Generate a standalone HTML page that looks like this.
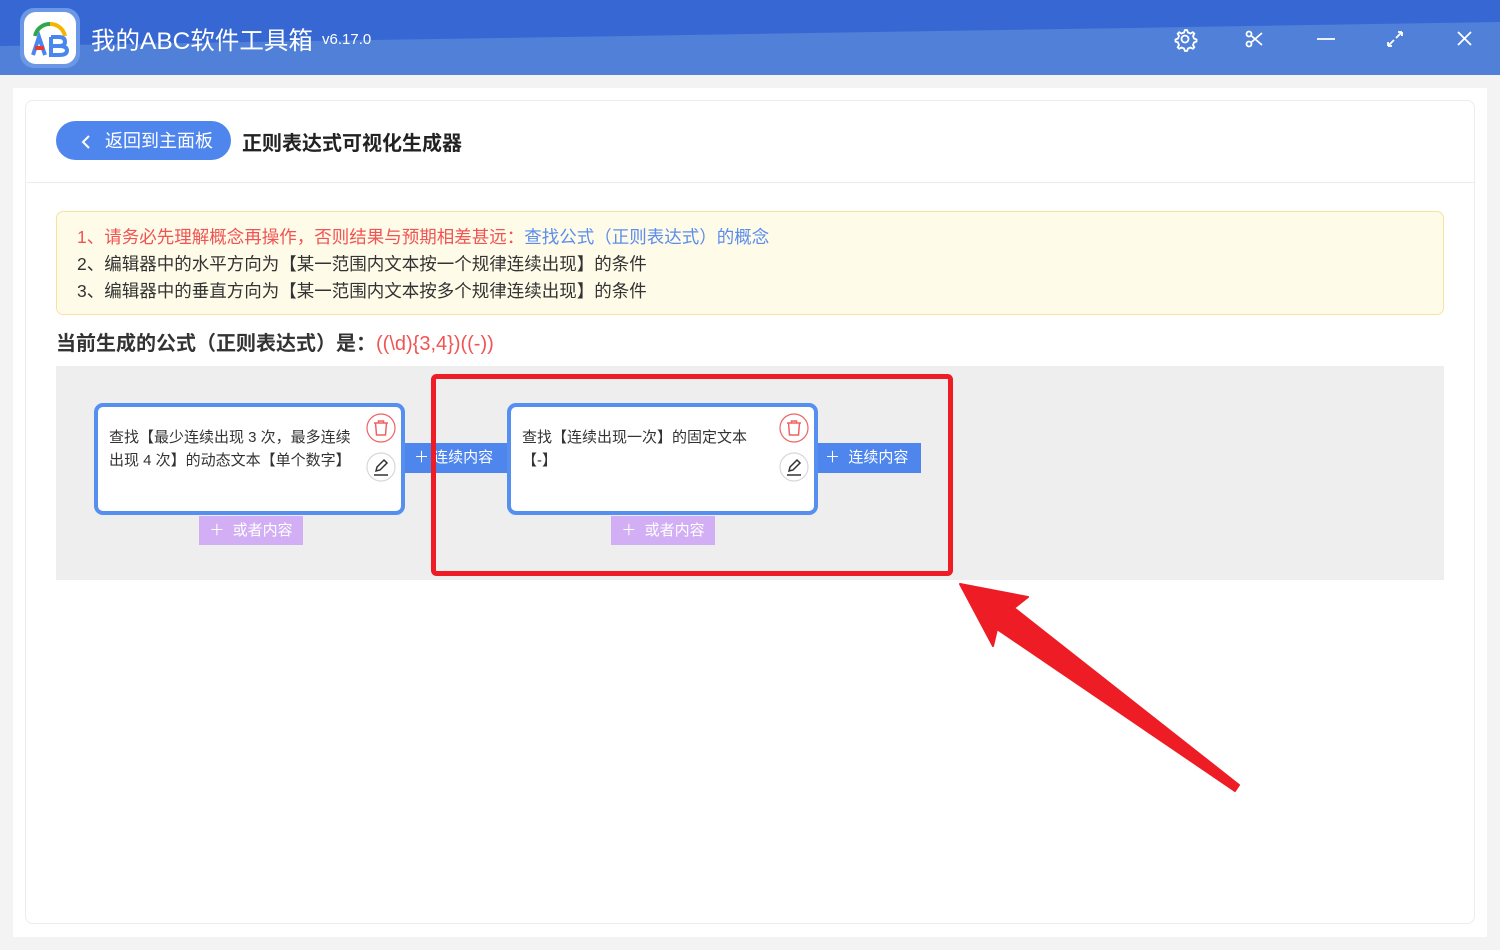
<!DOCTYPE html>
<html><head><meta charset="utf-8">
<style>
*{margin:0;padding:0;box-sizing:border-box}
body{width:1500px;height:950px;overflow:hidden;background:#f3f3f3;font-family:"Liberation Sans","Noto Sans CJK SC",sans-serif;position:relative}
.abs{position:absolute}
.hdr{left:0;top:0;width:1500px;height:75px;background:#5080d8;overflow:hidden}
.panel{left:13px;top:88px;width:1474px;height:849px;background:#fff}
.card{left:25px;top:100px;width:1450px;height:824px;border:1px solid #ececec;border-radius:8px;background:#fff}
.n{font-size:17.5px;white-space:nowrap;color:#333}
.node{background:#fff;border:4px solid #5590f0;border-radius:9px;width:311px;height:112px}
.nt{font-size:15px;color:#333;line-height:23px;white-space:nowrap}
.conn{background:#4f86ee;color:#fff;font-size:15px;height:30px;line-height:30px;white-space:nowrap}
.or{background:#d2aef5;color:#fff;font-size:15px;height:29px;line-height:29px;width:104px;text-align:center;white-space:nowrap}
</style></head><body>
<div class="abs hdr">
<svg width="1500" height="75" style="position:absolute;left:0;top:0"><polygon points="0,0 1500,0 1500,22 0,46" fill="#3767d2"/></svg>
</div>
<div class="abs" style="left:20px;top:8px;width:60px;height:60px;border-radius:14px;background:#6b98e6"></div>
<div class="abs" style="left:24px;top:12px;width:52px;height:52px;border-radius:12px;background:#fff">
<svg width="52" height="52" viewBox="0 0 52 52">
<path d="M11 24 A15 15 0 0 1 26 12" stroke="#2ea84a" stroke-width="4" fill="none"/>
<path d="M26 12 A15 15 0 0 1 41 24" stroke="#f4b400" stroke-width="4" fill="none"/>
<path d="M9 43 L15 25 L21 43" stroke="#4a86f0" stroke-width="4" fill="none"/>
<path d="M11 36 L20 36" stroke="#e53935" stroke-width="4"/>
<path d="M27 25 L35 25 Q41 25 41 30 Q41 34 35 34 L27 34 M35 34 Q43 34 43 38.5 Q43 43 35 43 L27 43 L27 25" stroke="#4a86f0" stroke-width="4" fill="none"/>
</svg></div>
<div class="abs" style="left:91px;top:22px;color:#fff;font-size:24.5px;white-space:nowrap">我的ABC软件工具箱</div>
<div class="abs" style="left:322px;top:31px;color:#fff;font-size:15px">v6.17.0</div>
<svg class="abs" style="left:1170px;top:24px" width="310" height="30" fill="none" stroke="#fff" stroke-width="1.8">
<circle cx="15" cy="15" r="3.5"/>
<path d="M15 6 l2 0 l1 2.5 l2.5 1 l2.3-1.3 l1.5 1.5 l-1.3 2.3 l1 2.5 l2.5 1 l0 2 l-2.5 1 l-1 2.5 l1.3 2.3 l-1.5 1.5 l-2.3-1.3 l-2.5 1 l-1 2.5 l-2 0 l-1-2.5 l-2.5-1 l-2.3 1.3 l-1.5-1.5 l1.3-2.3 l-1-2.5 l-2.5-1 l0-2 l2.5-1 l1-2.5 l-1.3-2.3 l1.5-1.5 l2.3 1.3 l2.5-1 z"/>
<circle cx="79" cy="10" r="2.5"/><circle cx="79" cy="20" r="2.5"/><path d="M81 11.5 L92 21 M81 18.5 L92 9"/>
<path d="M147 15 H165"/>
<path d="M218 22 L224 16 M226 14 L232 8 M218 22 v-4 M218 22 h4 M232 8 h-4 M232 8 v4"/>
<path d="M288 8 L301 21 M301 8 L288 21"/>
</svg>
<div class="abs panel"></div>
<div class="abs card"></div>
<div class="abs" style="left:25px;top:182px;width:1450px;height:1px;background:#ececec"></div>
<div class="abs" style="left:56px;top:121px;width:175px;height:39px;border-radius:20px;background:#4f86ee;color:#fff;font-size:18px;line-height:41px;padding-left:49px;white-space:nowrap">返回到主面板</div>
<svg class="abs" style="left:80px;top:134px" width="12" height="16"><path d="M9 2 L3 8 L9 14" stroke="#fff" stroke-width="2" fill="none"/></svg>
<div class="abs" style="left:242px;top:127px;font-size:20px;font-weight:bold;color:#222;white-space:nowrap">正则表达式可视化生成器</div>
<div class="abs" style="left:56px;top:211px;width:1388px;height:104px;background:#fefbe8;border:1px solid #f7e3a1;border-radius:7px"></div>
<div class="abs n" style="left:77px;top:224px;color:#f05454">1、请务必先理解概念再操作，否则结果与预期相差甚远：<span style="color:#5b8def">查找公式（正则表达式）的概念</span></div>
<div class="abs n" style="left:77px;top:251px">2、编辑器中的水平方向为【某一范围内文本按一个规律连续出现】的条件</div>
<div class="abs n" style="left:77px;top:278px">3、编辑器中的垂直方向为【某一范围内文本按多个规律连续出现】的条件</div>
<div class="abs" style="left:56px;top:327px;font-size:20px;font-weight:bold;color:#333;white-space:nowrap">当前生成的公式（正则表达式）是：<span style="color:#f05454;font-weight:normal;font-size:20px">((\d){3,4})((-))</span></div>
<div class="abs" style="left:56px;top:366px;width:1388px;height:214px;background:#eeeeee"></div>

<div class="abs conn" style="left:404px;top:443px;width:104px;padding-left:10px">＋ 连续内容</div>
<div class="abs conn" style="left:817px;top:443px;width:104px;padding-left:8px">＋&nbsp; 连续内容</div>
<div class="abs or" style="left:199px;top:516px">＋&nbsp; 或者内容</div>
<div class="abs or" style="left:611px;top:516px">＋&nbsp; 或者内容</div>

<div class="abs node" style="left:94px;top:403px"></div>
<div class="abs nt" style="left:109px;top:426px">查找【最少连续出现 3 次，最多连续<br>出现 4 次】的动态文本【单个数字】</div>
<div class="abs node" style="left:507px;top:403px"></div>
<div class="abs nt" style="left:522px;top:426px">查找【连续出现一次】的固定文本<br>【-】</div>

<svg class="abs" style="left:0;top:0" width="1500" height="950">
<g id="ic">
<circle cx="381" cy="428" r="14" fill="#fff" stroke="#f06262" stroke-width="1.2"/>
<path d="M374 423 h14 M378.5 423 v-2 h5 v2 M375.5 423 l1 12 h9 l1-12" stroke="#f06262" stroke-width="1.5" fill="none"/>
<circle cx="381" cy="467" r="14" fill="#fff" stroke="#d8d8d8" stroke-width="1.2"/>
<path d="M376 471 l1-4 l7-7 l3 3 l-7 7 z M374 475 h14" stroke="#333" stroke-width="1.5" fill="none"/>
</g>
<use href="#ic" x="413"/>
<rect x="433.5" y="376.5" width="517" height="197" rx="3" fill="none" stroke="#ee1c25" stroke-width="5"/>
<polygon points="960,584 1028,597 1014,608 1239,785 1235,791 997,629 993,646" fill="#ee1c25" stroke="#ee1c25" stroke-width="2" stroke-linejoin="round"/>
</svg>
</body></html>
